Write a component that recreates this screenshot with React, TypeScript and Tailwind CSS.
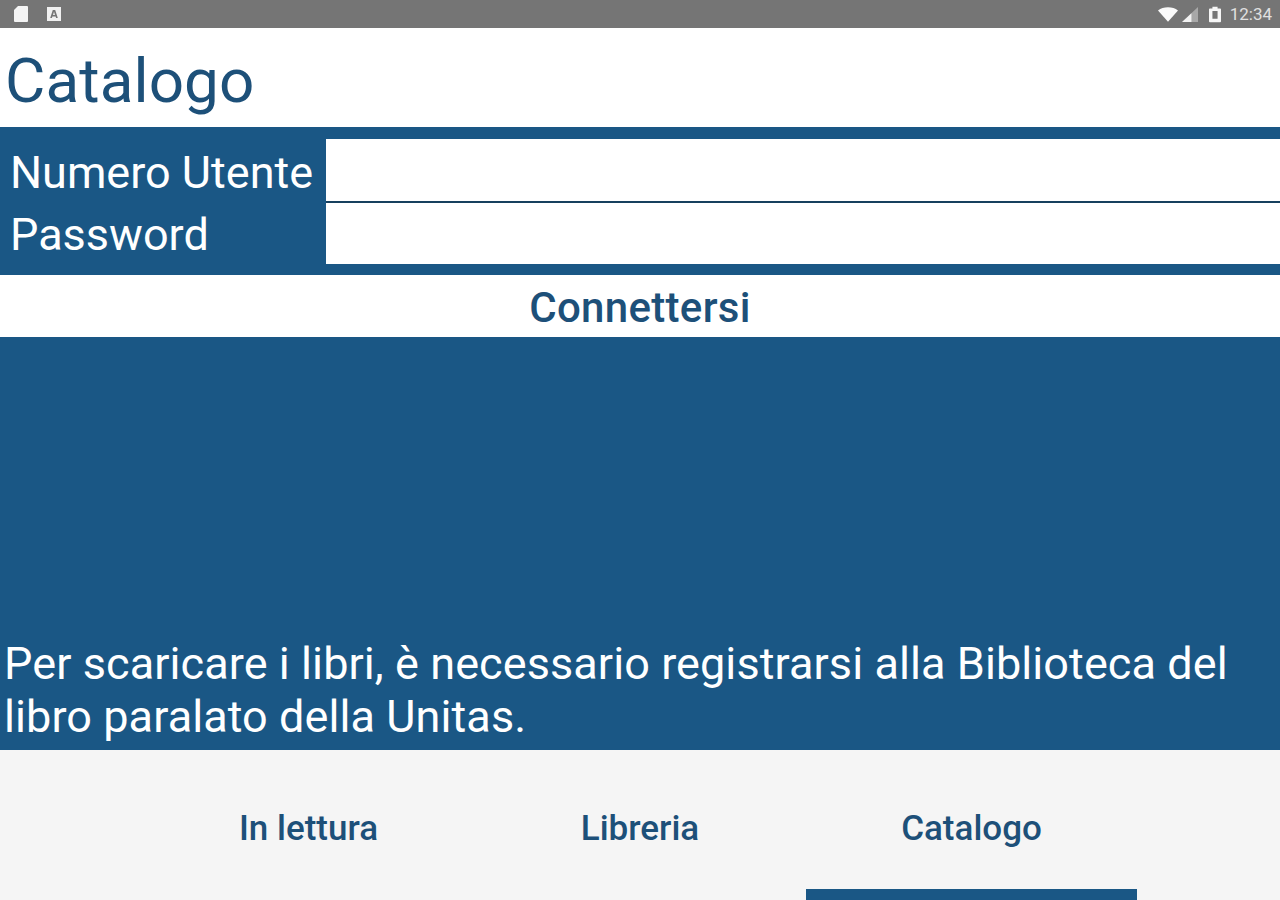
function SimIcon() {
  return (
    <svg width="16" height="18" viewBox="0 0 16 18" className="block">
      <path d="M5 1h9a1 1 0 0 1 1 1v14a1 1 0 0 1-1 1H2a1 1 0 0 1-1-1V5z" fill="#f4f4f4" />
    </svg>
  );
}
function AIcon() {
  return (
    <svg width="14" height="14" viewBox="0 0 14 14" className="block">
      <path fillRule="evenodd" d="M0 0h14v14H0zM5.8 3 3.2 11h1.7l.5-1.6h3.2l.5 1.6h1.7L8.2 3zM6 8l1-3.2L8 8z" fill="#f0f0f0" />
    </svg>
  );
}
function Wifi() {
  return (
    <svg width="20" height="15" viewBox="0 0 22 16" className="block">
      <path d="M0 3.5C3 1.2 6.8 0 11 0s8 1.2 11 3.5L11 16z" fill="#fafafa" />
    </svg>
  );
}
function Signal() {
  return (
    <svg width="17" height="15" viewBox="0 0 18 16" className="block">
      <path d="M0 16 17 0v16z" fill="#a8a8a8" />
      <path d="M0 16 10 6.6V16z" fill="#f2f2f2" />
    </svg>
  );
}
function Battery() {
  return (
    <svg width="12" height="17" viewBox="0 0 14 18" className="block">
      <path fillRule="evenodd" d="M4 0h6v2h3a1 1 0 0 1 1 1v14a1 1 0 0 1-1 1H1a1 1 0 0 1-1-1V3a1 1 0 0 1 1-1h3zM4 5v9h6V5z" fill="#f6f6f6" />
    </svg>
  );
}

export default function App() {
  return (
    <div className="flex h-[900px] w-[1280px] flex-col overflow-hidden bg-white font-['Roboto',sans-serif] text-[#1d5079]">
      <div className="flex h-[28px] items-center justify-between bg-[#757575] pl-[13px] pr-[8px]">
        <div className="flex items-center gap-[18px]">
          <SimIcon />
          <AIcon />
        </div>
        <div className="flex items-center">
          <Wifi />
          <div className="ml-[4px]"><Signal /></div>
          <div className="ml-[10px]"><Battery /></div>
          <span className="ml-[9px] text-[17px] leading-none text-[#e0e0e0]">12:34</span>
        </div>
      </div>

      <div className="flex h-[99px] items-center pl-[5px] pt-[7px]">
        <h1 className="text-[62px] leading-none font-normal tracking-[0.1px]">Catalogo</h1>
      </div>

      <div className="flex h-[148px] bg-[#1a5785] pt-[12px] pb-[11px] text-white">
        <div className="flex w-[326px] flex-col pl-[10px] pt-[3px] text-[45px] leading-[62px]">
          <div className="h-[64px]">Numero Utente</div>
          <div>Password</div>
        </div>
        <div className="flex flex-1 flex-col">
          <div className="h-[64px] border-b-2 border-[#17405e] bg-white" />
          <div className="h-[61px] bg-white" />
        </div>
      </div>

      <div className="flex h-[62px] items-center justify-center pt-[3px] text-[42px] font-medium leading-none tracking-[0.3px]">Connettersi</div>

      <div className="flex h-[413px] flex-col justify-end bg-[#1a5785] pl-[4px] pr-[5px] pb-[7px] text-[45px] leading-[53px] tracking-[0.08px] text-white">
        <p>Per scaricare i libri, è necessario registrarsi alla Biblioteca del</p>
        <p>libro paralato della Unitas.</p>
      </div>

      <div className="flex h-[150px] bg-[#f5f5f5] pl-[143px] text-[35px] font-medium leading-none">
        <div className="flex w-[331px] flex-col items-center pt-[61px]">In lettura</div>
        <div className="flex w-[332px] flex-col items-center pt-[61px]">Libreria</div>
        <div className="flex w-[331px] flex-col items-center justify-between pt-[61px]">
          <span>Catalogo</span>
          <div className="h-[11px] w-full bg-[#1a5785]" />
        </div>
      </div>
    </div>
  );
}
